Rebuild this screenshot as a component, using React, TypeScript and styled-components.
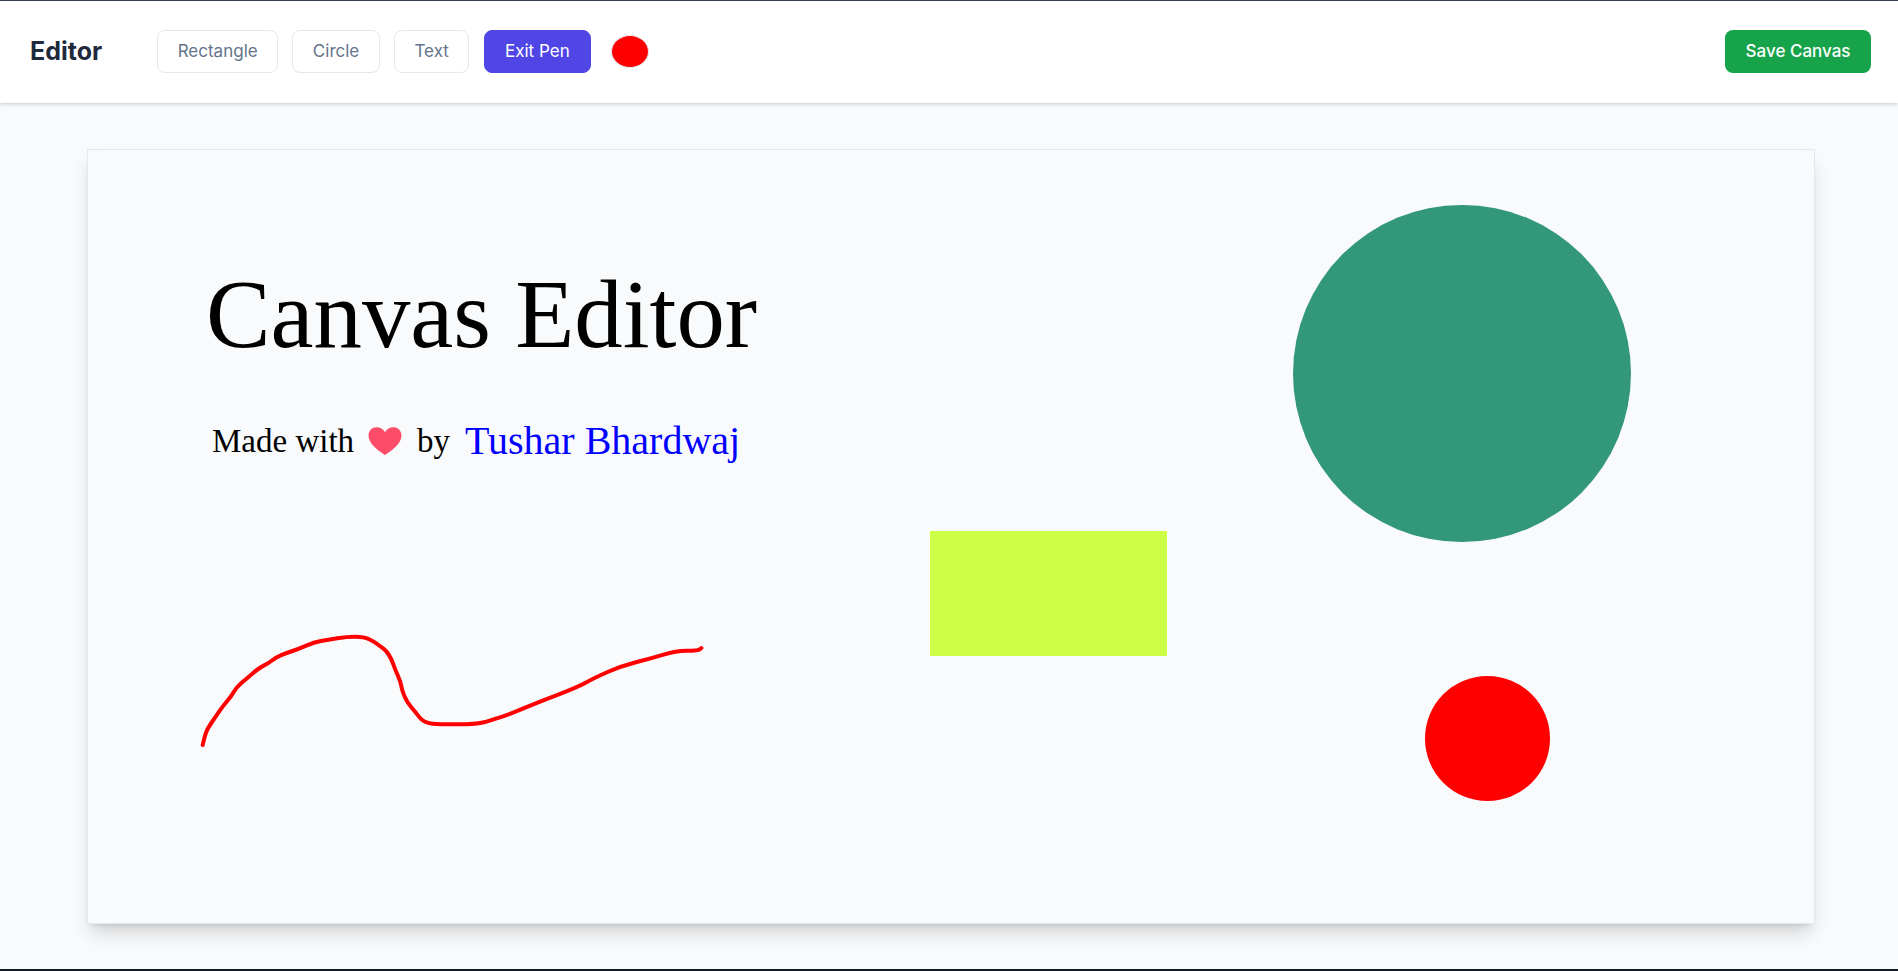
import React from "react";
import styled, { createGlobalStyle } from "styled-components";

const GlobalStyle = createGlobalStyle`
  html, body {
    margin: 0;
    padding: 0;
    background: #f9fafb;
  }
  * {
    box-sizing: border-box;
  }
`;

// pen stroke, in canvas coordinates
const penPoints = [
  [114.7, 595], [116.5, 587.3], [119.2, 579], [126.1, 569], [134.7, 556.3], [143.3, 546.3],
  [148.5, 537.3], [158.8, 528.3], [170.9, 518], [180.5, 513.3], [188.1, 507.3], [198.4, 503],
  [210.5, 499], [226, 492.3], [239.8, 489.7], [258.7, 486.7], [275.9, 486.7], [286.3, 491.7],
  [291.4, 495.7], [298.3, 500.7], [303.5, 509], [307.6, 520.7], [312.8, 532.3], [313.8, 539.7],
  [319, 552.3], [327.6, 562.3], [333.4, 570], [339.6, 573], [350, 574.3], [387.9, 574.3],
  [401.6, 570.7], [422.3, 564], [449.8, 552.3], [489.4, 537.3], [506.7, 527.7], [532.5, 516.3],
  [563.5, 508.3], [587.6, 501], [610, 500.7], [613.4, 498],
];

// smooth line through the midpoints of the sampled points
const penPath = penPoints.reduce((d, [x, y], i) => {
  if (i === 0) return `M${x} ${y}`;
  const [px, py] = penPoints[i - 1];
  return `${d} Q${px} ${py} ${(px + x) / 2} ${(py + y) / 2}`;
}, "") + ` L613.4 498`;

const App: React.FC = () => {
  return (
    <Page>
      <GlobalStyle />
      <Header>
        <Left>
          <Logo>Editor</Logo>
          <Tools>
            <ToolButton>Rectangle</ToolButton>
            <ToolButton>Circle</ToolButton>
            <ToolButton>Text</ToolButton>
            <ToolButton $active>Exit Pen</ToolButton>
            <Swatch aria-label="Colour" />
          </Tools>
        </Left>
        <SaveButton>Save Canvas</SaveButton>
      </Header>
      <Main>
        <Canvas>
          <CanvasText $x={118} $y={117} $size={96.8}>
            Canvas Editor
          </CanvasText>
          <CanvasText $x={124} $y={275} $size={33}>
            Made with
          </CanvasText>
          <Heart viewBox="0 0 34 28" aria-hidden="true">
            <path
              d="M17 28C12 24.5 0.5 17.5 0.5 8.5C0.5 3.5 4.3 0.2 8.6 0.2C12 0.2 15.2 2 17 5.2C18.8 2 22 0.2 25.4 0.2C29.7 0.2 33.5 3.5 33.5 8.5C33.5 17.5 22 24.5 17 28Z"
              fill="#fd4c69"
            />
          </Heart>
          <CanvasText $x={329} $y={275} $size={33}>
            by
          </CanvasText>
          <CanvasText $x={377} $y={270.5} $size={40} $color="#0000ff">
            Tushar Bhardwaj
          </CanvasText>
          <Circle $x={1205} $y={54.5} $size={337.5} $color="#329878" />
          <Rect $x={841.5} $y={381} $w={237.5} $h={124.5} $color="#ceff47" />
          <Circle $x={1336.5} $y={525.5} $size={125.5} $color="#ff0000" />
          <PenLayer aria-hidden="true">
            <path d={penPath} />
          </PenLayer>
        </Canvas>
      </Main>
    </Page>
  );
};

export default App;

const Page = styled.div`
  display: flex;
  flex-direction: column;
  height: 971px;
  overflow: hidden;
  border-top: 1px solid #374151;
  border-bottom: 2px solid #111827;
  background: #f9fafb;
  font-family: Inter, "Liberation Sans", sans-serif;
`;

const Header = styled.header`
  display: flex;
  align-items: center;
  justify-content: space-between;
  height: 102px;
  padding: 0 27px 2px 30px;
  background: #fff;
  box-shadow: 0 1px 4px rgba(15, 23, 42, 0.22);
  position: relative;
`;

const Left = styled.div`
  display: flex;
  align-items: center;
  gap: 55px;
`;

const Logo = styled.h1`
  margin: 0;
  font-size: 25px;
  font-weight: 700;
  color: #1e293b;
`;

const Tools = styled.div`
  display: flex;
  align-items: center;
  gap: 14.2px;
`;

const ToolButton = styled.button<{ $active?: boolean }>`
  height: 43px;
  padding: 0 ${(p) => (p.$active ? "20.5px" : "19.5px")};
  border: 1px solid ${(p) => (p.$active ? "#4f46e5" : "#e2e8f0")};
  border-radius: 8px;
  background: ${(p) => (p.$active ? "#4f46e5" : "#fff")};
  color: ${(p) => (p.$active ? "#fff" : "#64748b")};
  font-family: inherit;
  font-size: 17px;
  font-weight: 400;
`;

const Swatch = styled.button`
  width: 38px;
  height: 33px;
  margin-left: 5.5px;
  padding: 0;
  border: 1px solid #e5e7eb;
  border-radius: 50%;
  background: #ff0000;
`;

const SaveButton = styled.button`
  height: 43px;
  padding: 0 20.5px;
  border: none;
  border-radius: 8px;
  background: #16a34a;
  color: #fff;
  font-family: inherit;
  font-size: 17px;
  font-weight: 500;
`;

const Main = styled.main`
  flex: 1;
  display: flex;
  min-height: 0;
  padding: 46px 83px 45px 87px;
`;

const Canvas = styled.section`
  position: relative;
  flex: 1;
  border: 1px solid #e2e8f0;
  background: #f9fafb;
  box-shadow: 0 12px 18px -4px rgba(0, 0, 0, 0.16), 0 5px 7px -5px rgba(0, 0, 0, 0.14);
  font-family: "Liberation Serif", "Times New Roman", serif;
`;

const CanvasText = styled.span<{ $x: number; $y: number; $size: number; $color?: string }>`
  position: absolute;
  left: ${(p) => p.$x}px;
  top: ${(p) => p.$y}px;
  font-size: ${(p) => p.$size}px;
  line-height: 1;
  white-space: nowrap;
  color: ${(p) => p.$color || "#000"};
`;

const Heart = styled.svg`
  position: absolute;
  left: 280px;
  top: 277px;
  width: 34px;
  height: 28px;
`;

const Circle = styled.div<{ $x: number; $y: number; $size: number; $color: string }>`
  position: absolute;
  left: ${(p) => p.$x}px;
  top: ${(p) => p.$y}px;
  width: ${(p) => p.$size}px;
  height: ${(p) => p.$size}px;
  border-radius: 50%;
  background: ${(p) => p.$color};
`;

const Rect = styled.div<{ $x: number; $y: number; $w: number; $h: number; $color: string }>`
  position: absolute;
  left: ${(p) => p.$x}px;
  top: ${(p) => p.$y}px;
  width: ${(p) => p.$w}px;
  height: ${(p) => p.$h}px;
  background: ${(p) => p.$color};
`;

const PenLayer = styled.svg`
  position: absolute;
  inset: 0;
  width: 100%;
  height: 100%;
  pointer-events: none;

  path {
    fill: none;
    stroke: #ff0000;
    stroke-width: 4;
    stroke-linecap: round;
    stroke-linejoin: round;
  }
`;
